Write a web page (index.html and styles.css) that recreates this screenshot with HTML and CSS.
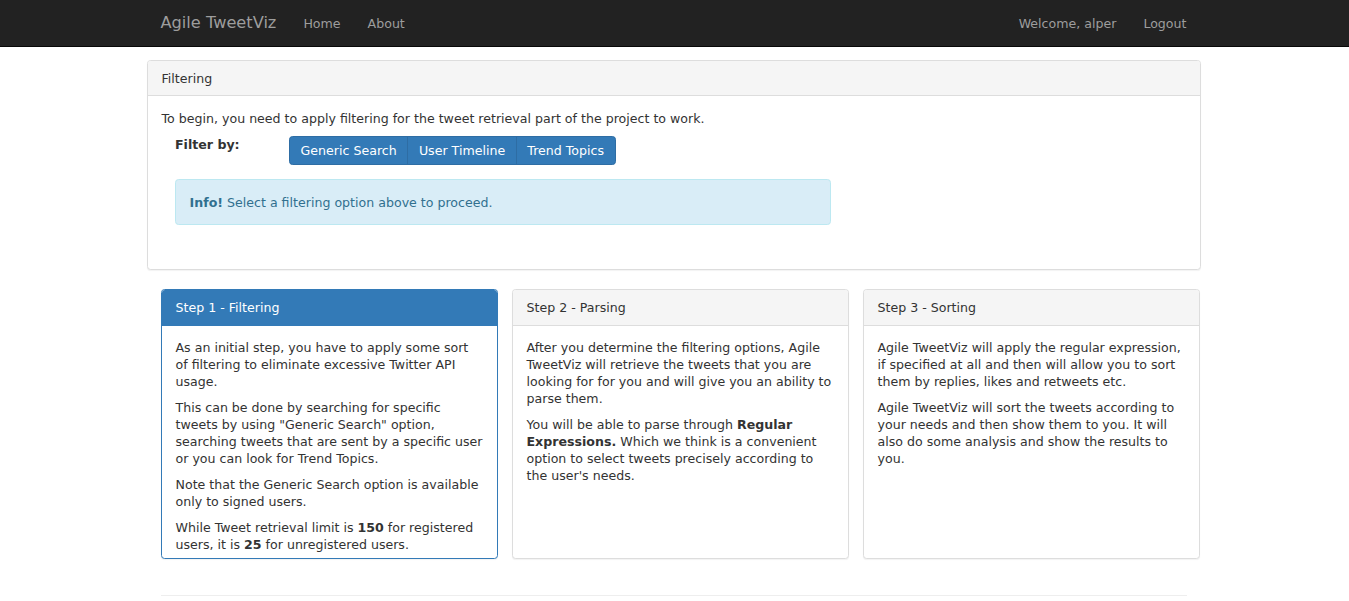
FILE: index.html
```html
<!DOCTYPE html>
<html lang="en">
<head>
<meta charset="utf-8">
<title>Agile TweetViz</title>
<link rel="stylesheet" href="styles.css">
</head>
<body>
<nav class="navbar">
  <div class="nav-inner">
    <a class="brand" href="#">Agile TweetViz</a>
    <ul class="nav-links">
      <li><a href="#">Home</a></li>
      <li><a href="#">About</a></li>
    </ul>
    <ul class="nav-links nav-right">
      <li><a href="#">Welcome, alper</a></li>
      <li><a href="#">Logout</a></li>
    </ul>
  </div>
</nav>

<main class="container">
  <section class="panel panel-main">
    <div class="panel-heading">Filtering</div>
    <div class="panel-body">
      <p>To begin, you need to apply filtering for the tweet retrieval part of the project to work.</p>
      <div class="filter-row">
        <label class="filter-label">Filter by:</label>
        <div class="btn-group">
          <button class="btn">Generic Search</button>
          <button class="btn">User Timeline</button>
          <button class="btn">Trend Topics</button>
        </div>
      </div>
      <div class="alert"><strong>Info!</strong> Select a filtering option above to proceed.</div>
    </div>
  </section>

  <div class="steps">
    <section class="panel step step-primary">
      <div class="panel-heading">Step 1 - Filtering</div>
      <div class="panel-body">
        <p>As an initial step, you have to apply some sort of filtering to eliminate excessive Twitter API usage.</p>
        <p>This can be done by searching for specific tweets by using "Generic Search" option, searching tweets that are sent by a specific user or you can look for Trend Topics.</p>
        <p>Note that the Generic Search option is available only to signed users.</p>
        <p>While Tweet retrieval limit is <strong>150</strong> for registered users, it is <strong>25</strong> for unregistered users.</p>
      </div>
    </section>
    <section class="panel step">
      <div class="panel-heading">Step 2 - Parsing</div>
      <div class="panel-body">
        <p>After you determine the filtering options, Agile TweetViz will retrieve the tweets that you are looking for for you and will give you an ability to parse them.</p>
        <p>You will be able to parse through <strong>Regular Expressions.</strong> Which we think is a convenient option to select tweets precisely according to the user's needs.</p>
      </div>
    </section>
    <section class="panel step">
      <div class="panel-heading">Step 3 - Sorting</div>
      <div class="panel-body">
        <p>Agile TweetViz will apply the regular expression, if specified at all and then will allow you to sort them by replies, likes and retweets etc.</p>
        <p>Agile TweetViz will sort the tweets according to your needs and then show them to you. It will also do some analysis and show the results to you.</p>
      </div>
    </section>
  </div>

  <hr class="divider">
</main>
</body>
</html>
```

FILE: styles.css
```css
* { box-sizing: border-box; }

html, body {
  margin: 0;
  padding: 0;
}

body {
  font-family: "DejaVu Sans", sans-serif;
  font-size: 12.6px;
  line-height: 17px;
  color: #333;
  background: #fff;
}

a { text-decoration: none; }

p { margin: 0 0 9px; }

/* Navbar */
.navbar {
  background: #222;
  border-bottom: 1px solid #080808;
  height: 47px;
}

.nav-inner {
  width: 1054px;
  margin-left: calc(50% - 527.5px);
  height: 46px;
  display: flex;
  align-items: center;
}

.brand {
  color: #9d9d9d;
  font-size: 16.2px;
  line-height: 18px;
  padding: 0 13.5px;
}

.nav-links {
  list-style: none;
  margin: 0;
  padding: 0;
  display: flex;
}

.nav-links a {
  display: block;
  color: #9d9d9d;
  padding: 0 13.5px;
  line-height: 17px;
}

.nav-right {
  margin-left: auto;
  margin-right: 1px;
}

/* Layout */
.container {
  width: 1054px;
  margin-left: calc(50% - 527.5px);
}

.panel {
  background: #fff;
  border: 1px solid #ddd;
  border-radius: 3.6px;
  box-shadow: 0 1px 1px rgba(0, 0, 0, 0.05);
}

.panel-heading {
  background: #f5f5f5;
  border-bottom: 1px solid #ddd;
  border-radius: 2.6px 2.6px 0 0;
  padding: 9px 13.5px;
  color: #333;
}

.panel-main .panel-heading {
  padding-top: 8.5px;
  padding-bottom: 8.5px;
}

.panel-body {
  padding: 13.5px;
}

.panel-main {
  margin-top: 13px;
}

.filter-row {
  display: flex;
  align-items: flex-start;
  margin-left: 13.5px;
}

.filter-label {
  width: 114px;
  font-weight: bold;
}

.btn-group {
  display: inline-flex;
}

.btn {
  font-family: inherit;
  font-size: 12.6px;
  line-height: 17px;
  color: #fff;
  background: #337ab7;
  border: 1px solid #2e6da4;
  padding: 5.4px 10.6px;
  margin: 0;
  border-radius: 0;
  cursor: pointer;
}

.btn + .btn { margin-left: -1px; }
.btn:first-child { border-radius: 3.6px 0 0 3.6px; }
.btn:last-child { border-radius: 0 3.6px 3.6px 0; }

.alert {
  width: 656px;
  margin: 14px 0 30.5px 13.5px;
  padding: 13.5px;
  background: #d9edf7;
  border: 1px solid #bce8f1;
  border-radius: 3.6px;
  color: #31708f;
}

/* Steps */
.steps {
  display: grid;
  grid-template-columns: repeat(3, 337px);
  gap: 14px;
  margin-top: 18.7px;
  padding-left: 14px;
}

.step {
  height: 270px;
  overflow: hidden;
}

.step-primary {
  border-color: #337ab7;
}

.step-primary .panel-heading {
  background: #337ab7;
  border-color: #337ab7;
  color: #fff;
}

.divider {
  margin: 36px 14px 0 14px;
  border: 0;
  border-top: 1px solid #eee;
}
```
